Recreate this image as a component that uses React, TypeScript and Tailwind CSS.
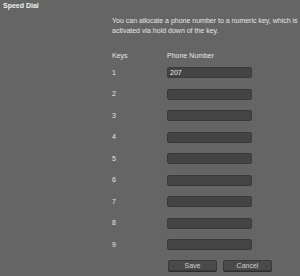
const keys = ['1', '2', '3', '4', '5', '6', '7', '8', '9'];
const numbers: Record<string, string> = { '1': '207' };

export default function App() {
  return (
    <div className="w-[300px] h-[276px] overflow-hidden bg-[#656565] text-[#e6e6e6] text-[7px] leading-[10px] font-['Liberation_Sans',Arial,sans-serif]">
      <div className="px-[3px] pt-[1px] font-bold text-[#f0f0f0]">Speed Dial</div>
      <div className="ml-[112px] pt-[5px]">
        <p className="w-[186px]">
          You can allocate a phone number to a numeric key, which is activated via hold down of the key.
        </p>
        <div className="mt-[15px] flex">
          <div className="w-[55px]">Keys</div>
          <div>Phone Number</div>
        </div>
        <div className="mt-[6px] grid auto-rows-[21.5px]">
          {keys.map(k => (
            <div key={k} className="flex items-start">
              <div className="w-[55px] h-[11px] flex items-center">{k}</div>
              <input
                readOnly
                value={numbers[k] ?? ''}
                className="w-[85px] h-[11px] rounded-[2px] bg-[#444444] border border-[#3a3a3a] px-[2px] text-[7px] text-[#f2f2f2] outline-none"
              />
            </div>
          ))}
        </div>
        <div className="ml-[56px] -mt-[0.5px] flex gap-[6px]">
          <button className="w-[49px] h-[11px] rounded-[2px] bg-[#4a4a4a] border border-[#3a3a3a] shadow-[0_1px_0_#2e2e2e] text-[7px] leading-[9px] text-[#d0d0d0]">
            Save
          </button>
          <button className="w-[49px] h-[11px] rounded-[2px] bg-[#4a4a4a] border border-[#3a3a3a] shadow-[0_1px_0_#2e2e2e] text-[7px] leading-[9px] text-[#d0d0d0]">
            Cancel
          </button>
        </div>
      </div>
    </div>
  );
}
